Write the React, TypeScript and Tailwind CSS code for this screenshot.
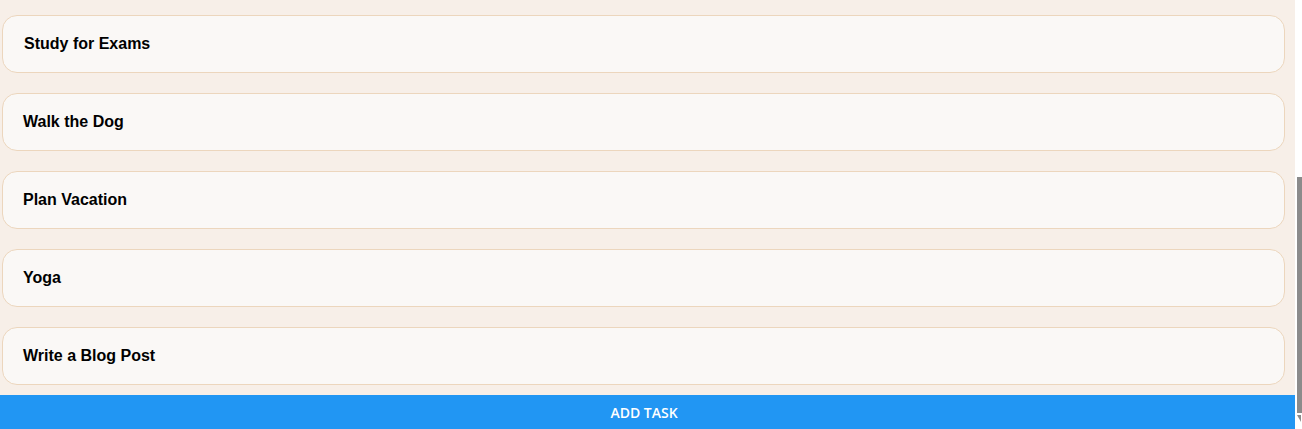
import React from "react";

const tasks = ["Study for Exams", "Walk the Dog", "Plan Vacation", "Yoga", "Write a Blog Post"];

export default function App() {
  return (
    <div className="flex h-[429px] w-[1302px] overflow-hidden bg-white">
      <div className="flex w-[1295px] flex-col bg-[#f7efe8]">
        <div className="flex flex-1 flex-col gap-[20px] pl-[2px] pt-[15px]">
          {tasks.map((t, i) => (
            <div
              key={t}
              className={`flex h-[58px] w-[1283px] items-center rounded-[15px] border border-[#ecd6bd] bg-[#faf8f6] ${i === 0 ? "pl-[21px]" : "pl-[20px]"}`}
            >
              <span className="text-[16px] font-bold text-black" style={{ fontFamily: '"Liberation Sans", Arial, sans-serif' }}>
                {t}
              </span>
            </div>
          ))}
        </div>
        <div
          className="flex h-[34px] items-center justify-center bg-[#2196f3] pr-[7px] text-[14px] font-semibold text-white"
          style={{ fontFamily: '"Open Sans", sans-serif' }}
        >
          ADD TASK
        </div>
      </div>
      <div className="flex w-[7px] flex-col bg-white pl-[2px]">
        <div className="h-[177px]" />
        <div className="h-[236px] w-[5px] bg-[#8b8b8b]" />
        <div className="mt-[2px] h-0 w-0 border-l-[4px] border-r-[0px] border-t-[7px] border-l-transparent border-t-[#8b8b8b]" />
      </div>
    </div>
  );
}
